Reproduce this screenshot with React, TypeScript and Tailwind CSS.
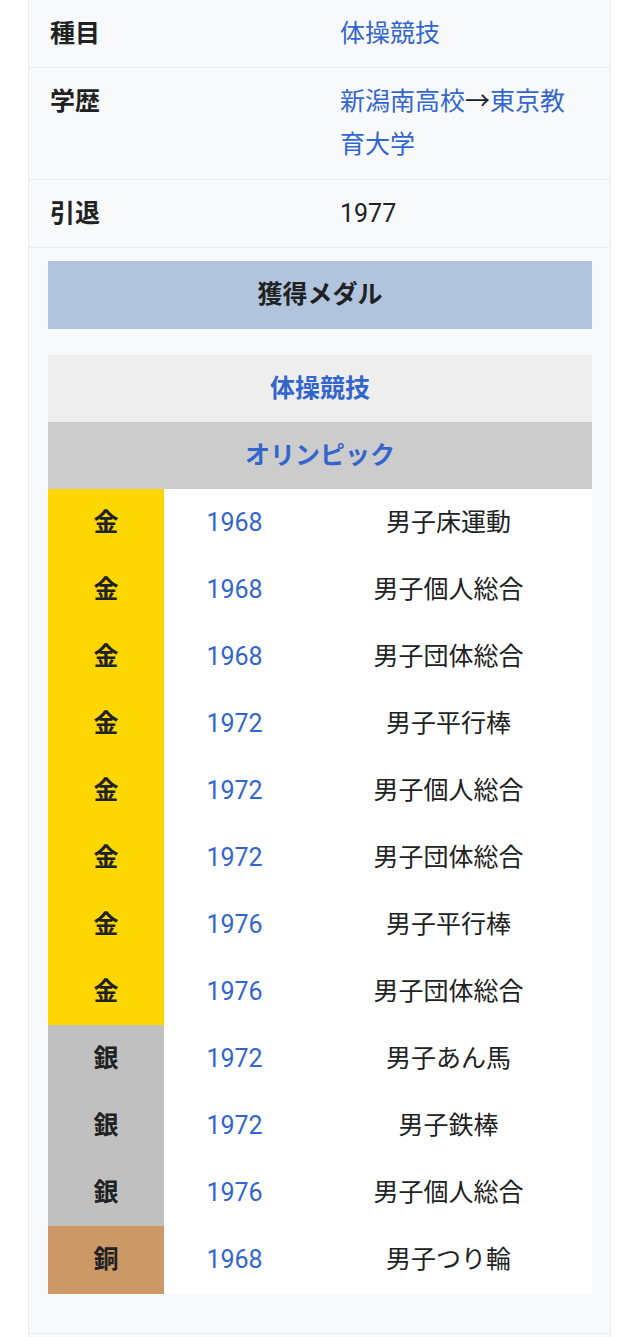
// App.tsx — infobox: 体操競技 medal record
const font = { fontFamily: 'Roboto, "Noto Sans CJK JP", sans-serif' };

// --- Infobox rows ---
const rows = [
  { label: "種目", value: [{ text: "体操競技", link: true }] },
  {
    label: "学歴",
    value: [
      { text: "新潟南高校", link: true },
      { text: "→", link: false },
      { text: "東京教育大学", link: true },
    ],
  },
  { label: "引退", value: [{ text: "1977", link: false }] },
];

// --- Medals ---
type Medal = "gold" | "silver" | "bronze";
const medals: { kind: Medal; year: string; event: string }[] = [
  { kind: "gold", year: "1968", event: "男子床運動" },
  { kind: "gold", year: "1968", event: "男子個人総合" },
  { kind: "gold", year: "1968", event: "男子団体総合" },
  { kind: "gold", year: "1972", event: "男子平行棒" },
  { kind: "gold", year: "1972", event: "男子個人総合" },
  { kind: "gold", year: "1972", event: "男子団体総合" },
  { kind: "gold", year: "1976", event: "男子平行棒" },
  { kind: "gold", year: "1976", event: "男子団体総合" },
  { kind: "silver", year: "1972", event: "男子あん馬" },
  { kind: "silver", year: "1972", event: "男子鉄棒" },
  { kind: "silver", year: "1976", event: "男子個人総合" },
  { kind: "bronze", year: "1968", event: "男子つり輪" },
];

const medalStyle: Record<Medal, { bg: string; label: string }> = {
  gold: { bg: "bg-[#ffd700]", label: "金" },
  silver: { bg: "bg-[#c0c0c0]", label: "銀" },
  bronze: { bg: "bg-[#cc9966]", label: "銅" },
};

export default function App() {
  return (
    <div className="min-h-screen bg-white pl-[28px] pr-[29px] text-[25px] text-[#202122]" style={font}>
      <div className="border-x border-[#eaecf0] bg-[#f8f9fa]">
        {/* Basic rows */}
        {rows.map((r) => (
          <div key={r.label} className="flex border-b border-[#eaecf0] leading-[43px]">
            <div className="w-[311px] shrink-0 pl-[21px] pt-[12px] font-bold">{r.label}</div>
            <div className={`flex-1 pr-[20px] pt-[12px] ${r.value.length > 1 ? "pb-[13px]" : "pb-[12px]"}`}>
              {r.value.map((v, i) =>
                v.link ? (
                  <span key={i} className="text-[#3366cc]">
                    {v.text}
                  </span>
                ) : (
                  <span key={i}>{v.text}</span>
                )
              )}
            </div>
          </div>
        ))}

        {/* Medal section */}
        <div className="border-b border-[#eaecf0] pt-[13px] pb-[39px]">
          <div className="ml-[19px] w-[544px]">
            <div className="flex h-[68px] items-center justify-center bg-[#b0c4de] font-bold">獲得メダル</div>
            <div className="mt-[26px] bg-white">
              <div className="flex h-[67px] items-center justify-center bg-[#eeeeee] font-bold text-[#3366cc]">
                体操競技
              </div>
              <div className="flex h-[67px] items-center justify-center bg-[#cccccc] font-bold text-[#3366cc]">
                オリンピック
              </div>
              {medals.map((m, i) => (
                <div key={i} className={`flex items-center ${i === medals.length - 1 ? "h-[68px]" : "h-[67px]"}`}>
                  <div
                    className={`${medalStyle[m.kind].bg} flex h-full w-[116px] items-center justify-center font-bold`}
                  >
                    {medalStyle[m.kind].label}
                  </div>
                  <div className="w-[141px] text-center text-[#3366cc]">{m.year}</div>
                  <div className="flex-1 text-center">{m.event}</div>
                </div>
              ))}
            </div>
          </div>
        </div>
        <div className="h-[10px]" />
      </div>
    </div>
  );
}
